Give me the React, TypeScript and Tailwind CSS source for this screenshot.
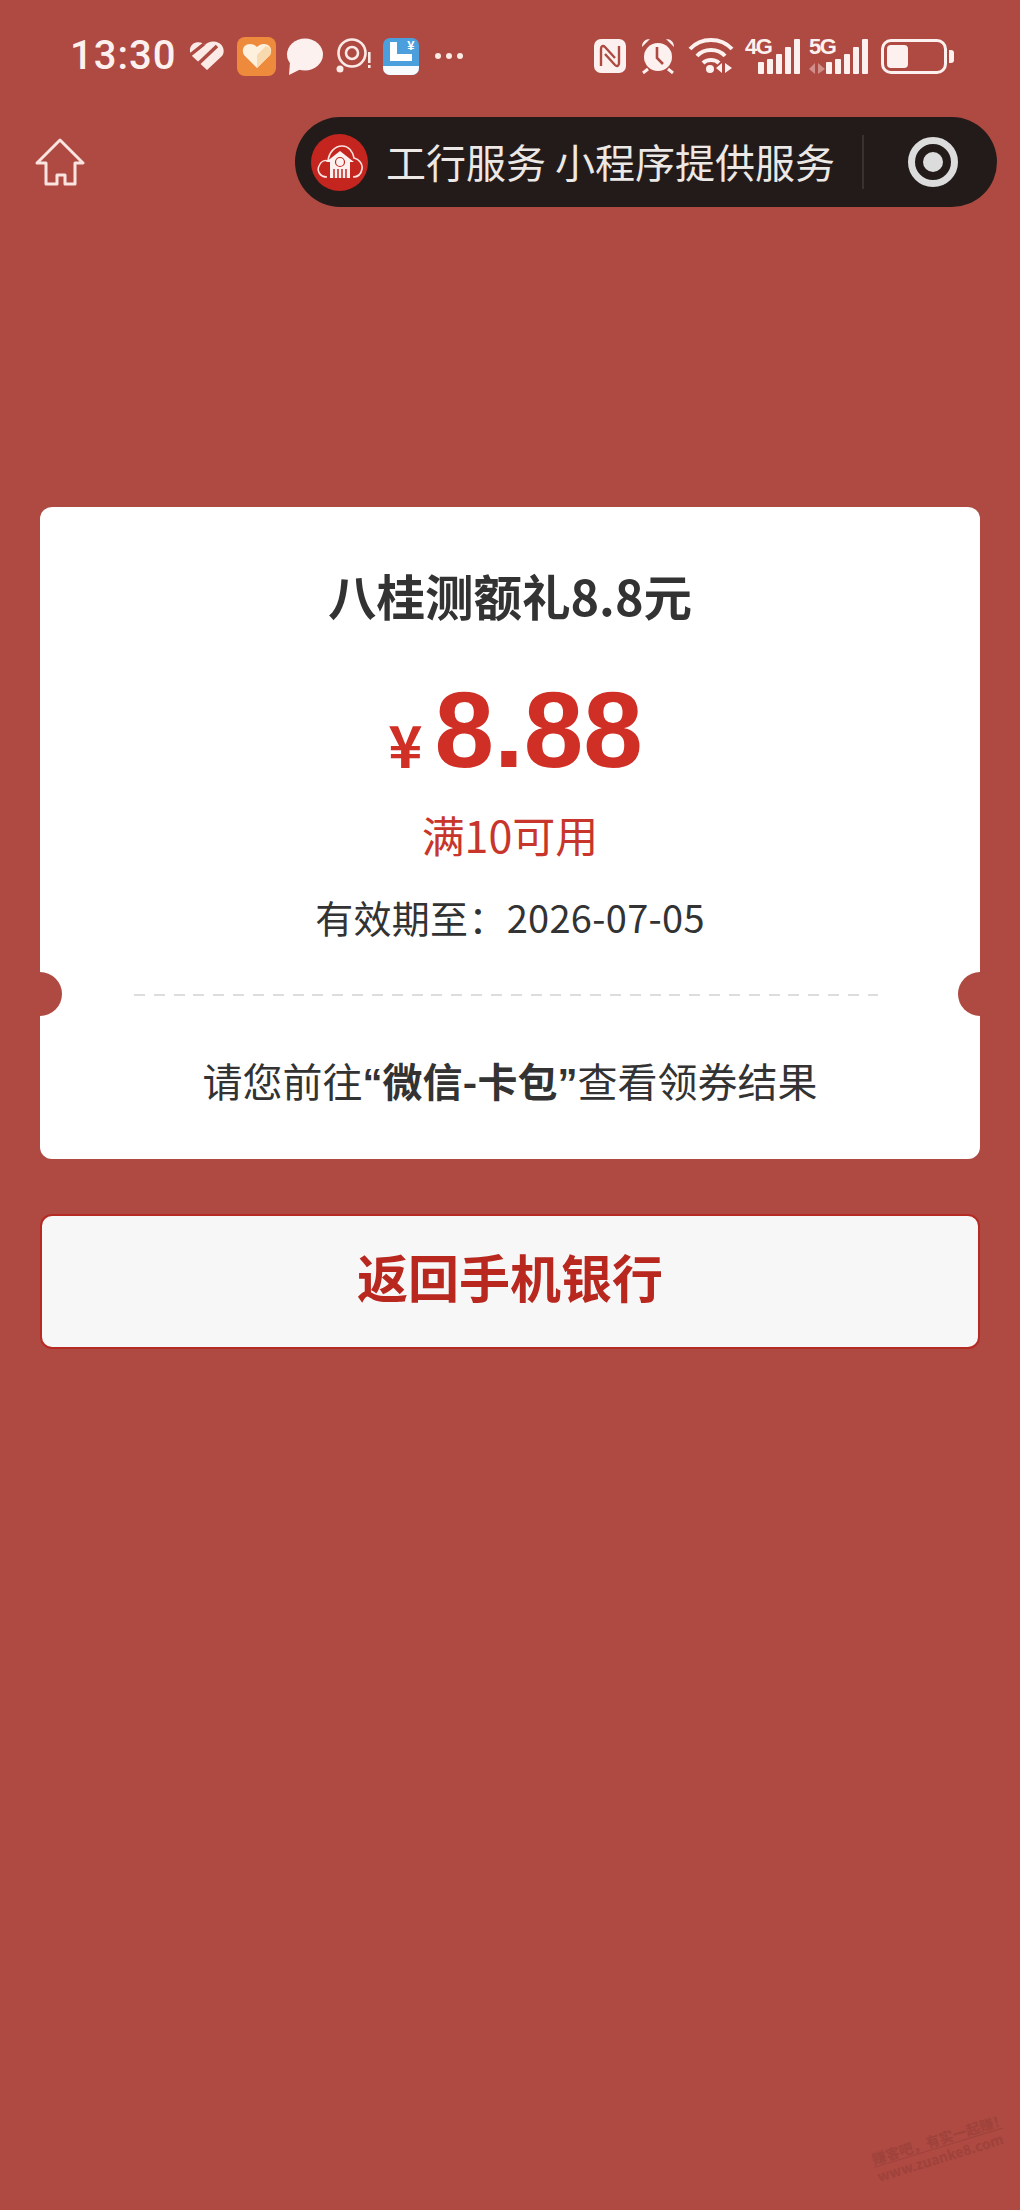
const cjk = "font-['Noto_Sans_CJK_SC','Noto_Sans',sans-serif]";

function HeartSlash() {
  return (
    <svg width="36" height="30" viewBox="0 0 36 30" className="ml-[13px]">
      <path d="M18 29 L3 15 C-1 10 1 3 7 1.500 C11 .5 14 2 16 4 C19 .5 25 -.5 30 2 C35 5 36 11 33 15 Z" fill="#fbeae6" />
      <path d="M0 15 L15 3 M8 24 L28 5" stroke="#ae4a42" strokeWidth="3.500" />
    </svg>
  );
}

function OrangeApp() {
  return (
    <div className="ml-[12px] w-[39px] h-[39px] rounded-[8px] bg-[#ee8a3c] flex items-center justify-center">
      <svg width="30" height="26" viewBox="0 0 30 26">
        <path d="M15 25 L2 12 C-1 7 2 1 8 1 C11 1 13 2 15 4 C17 2 19 1 22 1 C28 1 31 7 28 12 Z" fill="#fdf1dd" />
        <path d="M15 25 L15 12 L24 3 C29 5 30 9 28 12 Z" fill="#f8d9ae" />
      </svg>
    </div>
  );
}

function Bubble() {
  return (
    <svg width="37" height="37" viewBox="0 0 37 37" className="ml-[10px]">
      <ellipse cx="19" cy="16.500" rx="18" ry="16" fill="#fdf1ef" />
      <path d="M4 24 L3 37 L15 31 Z" fill="#fdf1ef" />
    </svg>
  );
}

function TargetAlert() {
  return (
    <svg width="36" height="36" viewBox="0 0 36 36" className="ml-[13px]">
      <circle cx="16" cy="15" r="13.500" fill="none" stroke="#fbeae6" strokeWidth="2.600" />
      <circle cx="16" cy="15" r="6" fill="none" stroke="#fbeae6" strokeWidth="2.600" />
      <circle cx="4" cy="31" r="3.500" fill="#fbeae6" />
      <rect x="32" y="14" width="2.600" height="11" fill="#fbeae6" />
      <rect x="32" y="27" width="2.600" height="3" fill="#fbeae6" />
    </svg>
  );
}

function BlueApp() {
  return (
    <div className="ml-[11px] relative w-[36px] h-[37px] rounded-[7px] overflow-hidden bg-[#4a9fdc]">
      <div className="absolute left-[7px] top-[4px] w-[7px] h-[19px] bg-white" />
      <div className="absolute left-[7px] top-[16px] w-[22px] h-[7px] bg-white" />
      <div className="absolute left-0 right-0 bottom-0 h-[9px] bg-[#f7fbfe]" />
      <span className="absolute right-[5px] top-[1px] text-white text-[13px] leading-[14px] font-bold font-['Liberation_Sans',sans-serif]">¥</span>
    </div>
  );
}

function Dots() {
  return (
    <div className="ml-[16px] flex gap-[5px]">
      <div className="w-[6px] h-[6px] rounded-full bg-[#fbeae6]" />
      <div className="w-[6px] h-[6px] rounded-full bg-[#fbeae6]" />
      <div className="w-[6px] h-[6px] rounded-full bg-[#fbeae6]" />
    </div>
  );
}

function Nfc() {
  return (
    <svg width="32" height="34" viewBox="0 0 32 34">
      <rect x="0" y="0" width="32" height="34" rx="7" fill="#fdf1ef" />
      <path d="M7 27 V10 C7 7 9 6 11 8 L21 19 M25 7 V24 C25 27 23 28 21 26 L11 15" fill="none" stroke="#ae4a42" strokeWidth="2.400" />
    </svg>
  );
}

function Alarm() {
  return (
    <svg width="36" height="36" viewBox="0 0 36 36" className="ml-[14px]">
      <circle cx="18" cy="19" r="14" fill="#fdf1ef" />
      <path d="M2 9 C2 4 5 1 10 1 Z M34 9 C34 4 31 1 26 1 Z" fill="#fdf1ef" />
      <path d="M8 31 L3 35 M28 31 L33 35" stroke="#fdf1ef" strokeWidth="3" />
      <path d="M17 9 V20 L23 26" fill="none" stroke="#ae4a42" strokeWidth="2.600" />
    </svg>
  );
}

function Wifi() {
  return (
    <svg width="46" height="36" viewBox="0 0 46 36" className="ml-[12px]">
      <path d="M2 11 C13 -1 33 -1 44 11" fill="none" stroke="#fdf1ef" strokeWidth="4" />
      <path d="M9 18 C16 10 30 10 37 18" fill="none" stroke="#fdf1ef" strokeWidth="4" />
      <path d="M15 25 C19 21 27 21 31 25" fill="none" stroke="#fdf1ef" strokeWidth="4" />
      <circle cx="22" cy="31" r="4" fill="#fdf1ef" />
      <path d="M34 25 V35 L28 30 Z M37 25 V35 L44 30 Z" fill="#fdf1ef" />
    </svg>
  );
}

function Signal({ label, muted }: { label: string; muted?: boolean }) {
  const heights = [12, 15, 20, 27, 35];
  return (
    <div className={`relative h-[36px] flex items-end justify-end gap-[3px] ${muted ? "ml-[9px] w-[59px]" : "ml-[11px] w-[55px]"}`}>
      <span className="absolute left-0 top-[-3px] text-[#fdf1ef] text-[22px] leading-[24px] font-bold font-['Liberation_Sans',sans-serif] tracking-[-1.5px]">{label}</span>
      {muted && (
        <svg width="17" height="11" viewBox="0 0 17 11" className="absolute left-0 bottom-0">
          <path d="M6 0 V11 L0 6 Z M9 0 V11 L16 6 Z" fill="#d28f89" />
        </svg>
      )}
      {heights.map((h, i) => (
        <div key={i} className="w-[6px] rounded-[1px] bg-[#fdf1ef]" style={{ height: h }} />
      ))}
    </div>
  );
}

function Battery() {
  return (
    <div className="ml-[13px] flex items-center gap-[2px]">
      <div className="w-[66px] h-[35px] rounded-[10px] border-[3px] border-[#fdf1ef] p-[3px]">
        <div className="w-[21px] h-full rounded-[4px] bg-[#fdf1ef]" />
      </div>
      <div className="w-[5px] h-[13px] rounded-r-[3px] bg-[#fdf1ef]" />
    </div>
  );
}

function HomeIcon() {
  return (
    <svg width="50" height="48" viewBox="0 0 50 48">
      <path
        d="M25 2 L48 25 L40 25 L40 46 L30 46 L30 37 L22 37 L22 46 L11 46 L11 25 L2 25 Z"
        fill="none"
        stroke="#fbe3df"
        strokeWidth="3"
        strokeLinejoin="round"
      />
    </svg>
  );
}

function IcbcLogo() {
  return (
    <div className="w-[57px] h-[57px] rounded-full bg-[#c4251f] flex items-center justify-center">
      <svg width="46" height="36" viewBox="0 0 46 36">
        <path d="M10 33 C2 33 0 26 2 22 C4 17 8 16 11 17 C12 8 18 2 25 2 C32 2 36 8 37 14 C42 15 46 20 45 25 C44 31 40 33 36 33" fill="none" stroke="#fbe3df" strokeWidth="1.600" />
        <path d="M23 7 L37 18 L33 18 L33 34 L13 34 L13 18 L9 18 Z" fill="#fdf1ef" />
        <circle cx="23" cy="18" r="4.500" fill="none" stroke="#c4251f" strokeWidth="1.200" />
        <path d="M17 34 V25 M21 34 V25 M25 34 V25 M29 34 V25" stroke="#c4251f" strokeWidth="1.500" />
      </svg>
    </div>
  );
}

export default function App() {
  return (
    <div className={`relative min-h-[2210px] w-full overflow-hidden bg-[#ae4a42] ${cjk}`}>
      {/* status bar */}
      <div className="h-[112px] flex items-center justify-between pl-[70px] pr-[66px]">
        <div className="flex items-center">
          <span className="text-[#fdf1ef] text-[40px] leading-[48px] font-medium font-['Roboto',sans-serif] tracking-[1px]">13:30</span>
          <HeartSlash />
          <OrangeApp />
          <Bubble />
          <TargetAlert />
          <BlueApp />
          <Dots />
        </div>
        <div className="flex items-center">
          <Nfc />
          <Alarm />
          <Wifi />
          <Signal label="4G" />
          <Signal label="5G" muted />
          <Battery />
        </div>
      </div>

      {/* nav row */}
      <div className="mt-[5px] h-[90px] flex items-center justify-between pl-[35px] pr-[23px]">
        <HomeIcon />
        <div className="w-[702px] h-[90px] rounded-full bg-[#231b1a] flex items-center pl-[16px]">
          <IcbcLogo />
          <span className="ml-[18px] mb-[2px] w-[444px] text-[#ece8e6] text-[40px] leading-[50px] whitespace-nowrap">工行服务 小程序提供服务</span>
          <div className="ml-[32px] w-[2px] h-[54px] bg-[#3a3130]" />
          <div className="ml-[44px] w-[50px] h-[50px] rounded-full border-[7px] border-[#dcdcdc] flex items-center justify-center">
            <div className="w-[20px] h-[20px] rounded-full bg-[#dcdcdc]" />
          </div>
        </div>
      </div>

      {/* coupon card */}
      <div className="relative mt-[300px] mx-[40px] h-[652px] rounded-[12px] bg-white overflow-hidden flex flex-col items-center">
        <div className="absolute left-[-22px] top-[465px] w-[44px] h-[44px] rounded-full bg-[#ae4a42]" />
        <div className="absolute right-[-22px] top-[465px] w-[44px] h-[44px] rounded-full bg-[#ae4a42]" />

        <div className="mt-[58px] text-[48.5px] leading-[60px] font-bold text-[#333333]">八桂测额礼8.8元</div>
        <div className="ml-[11px] mt-[50px] h-[110px] flex items-center text-[#cf2f24] font-['Liberation_Sans',sans-serif] font-bold">
          <span className="mt-[26px] text-[58px] leading-[70px] mr-[12px] font-['Noto_Sans_CJK_SC',sans-serif]">¥</span>
          <span className="text-[107px] leading-[110px]">8.88</span>
        </div>
        <div className="mt-[21px] text-[43px] leading-[56px] text-[#c8352b]">满10可用</div>
        <div className="mt-[29px] text-[38px] leading-[52px] tracking-[0.3px] text-[#333333]">有效期至：2026-07-05</div>
        <div className="self-start ml-[94px] mt-[51px] w-[744px] h-[2px] bg-[repeating-linear-gradient(90deg,#dddddd_0,#dddddd_11px,transparent_11px,transparent_19.83px)]" />
        <div className="mt-[54px] text-[40px] leading-[60px] text-[#333333]">
          请您前往
          <span className="font-bold">
            <span className="font-['Liberation_Sans',sans-serif]">“</span>微信-卡包<span className="font-['Liberation_Sans',sans-serif]">”</span>
          </span>
          查看领券结果
        </div>
      </div>

      {/* back button */}
      <div className="mt-[55px] mx-[40px] h-[135px] rounded-[12px] border-2 border-[#b52b24] bg-[#f7f7f7] flex items-center justify-center pb-[12px]">
        <span className="text-[51px] leading-[60px] font-bold text-[#b8281f]">返回手机银行</span>
      </div>

      {/* forum watermark */}
      <div className="absolute left-[872px] top-[2130px] w-[134px] -rotate-[17deg] text-[#8f3b35] opacity-50 text-[14px] leading-[18px] font-bold whitespace-nowrap">
        赚客吧，有实一起赚！
        <br />
        www.zuanke8.com
        <div className="absolute left-0 right-0 top-[17px] h-px bg-[#8f3b35]" />
      </div>
    </div>
  );
}
